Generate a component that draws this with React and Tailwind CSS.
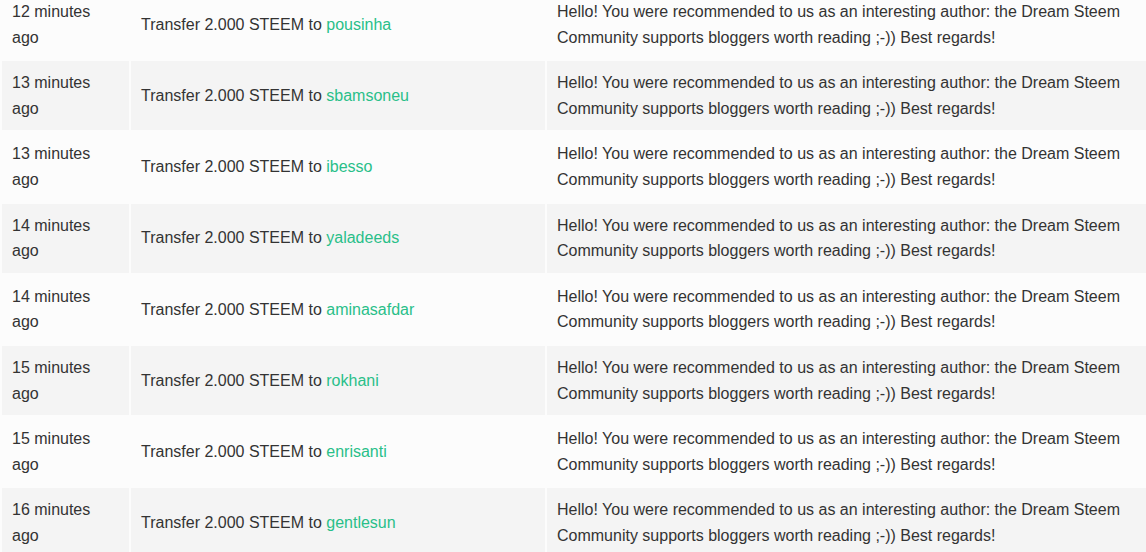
const rows = [
	{ time: '12 minutes ago', to: 'pousinha' },
	{ time: '13 minutes ago', to: 'sbamsoneu' },
	{ time: '13 minutes ago', to: 'ibesso' },
	{ time: '14 minutes ago', to: 'yaladeeds' },
	{ time: '14 minutes ago', to: 'aminasafdar' },
	{ time: '15 minutes ago', to: 'rokhani' },
	{ time: '15 minutes ago', to: 'enrisanti' },
	{ time: '16 minutes ago', to: 'gentlesun' },
];

const memo =
	'Hello! You were recommended to us as an interesting author: the Dream Steem Community supports bloggers worth reading ;-)) Best regards!';

export default function App() {
	return (
		<div className="w-[1146px] h-[552px] overflow-hidden bg-[#fcfcfc] font-['Liberation_Sans',Arial,sans-serif] text-[16px] leading-[25.6px] text-[#333]">
			<table className="w-[1148px] mt-[-12px] border-separate border-spacing-[2px] table-fixed">
				<colgroup>
					<col className="w-[127px]" />
					<col className="w-[414px]" />
					<col />
				</colgroup>
				<tbody>
					{rows.map((r, idx) => (
						<tr
							key={idx}
							className={idx % 2 === 1 ? 'bg-[#f4f4f4]' : 'bg-[#fcfcfc]'}
						>
							<td className="h-[69px] px-[10px] py-[9px] align-middle">
								{r.time}
							</td>
							<td className="px-[10px] py-[9px] align-middle">
								Transfer 2.000 STEEM to{' '}
								<a className="text-[#29bf89]" href="#">
									{r.to}
								</a>
							</td>
							<td className="px-[10px] py-[9px] align-middle">{memo}</td>
						</tr>
					))}
				</tbody>
			</table>
		</div>
	);
}
